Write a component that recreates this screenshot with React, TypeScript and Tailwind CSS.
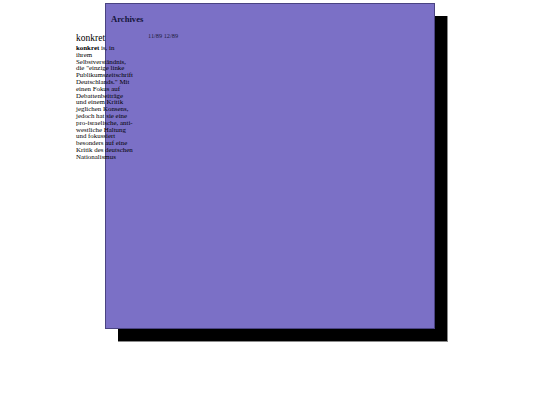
import React from 'react';

const lines = [
  'ihrem',
  'Selbstverständnis,',
  'die "einzige linke',
  'Publikumszeitschrift',
  'Deutschlands." Mit',
  'einen Fokus auf',
  'Debattenbeiträge',
  'und einem Kritik',
  'jeglichen Konsens,',
  'jedoch hat sie eine',
  'pro-israelische, anti-',
  'westliche Haltung',
  'und fokussiert',
  'besonders auf eine',
  'Kritik des deutschen',
  'Nationalismus',
];

export default function App() {
  return (
    <div className="relative w-[540px] h-[405px] bg-white overflow-hidden font-['Liberation_Serif',serif] text-black">
      {/* Archives panel with drop shadow */}
      <div className="absolute left-[118px] top-[16px] w-[330px] h-[326px] bg-black border-r border-b border-[#8a8a8a]" />
      <div className="absolute left-[105px] top-[3px] w-[330px] h-[326px] bg-[#7b70c6] border border-[#4a4382]">
        <h2 className="ml-[5px] mt-[10px] text-[8.6px] leading-[10px] font-bold text-[#14143a]">Archives</h2>
        <div className="ml-[42px] mt-[8px] text-[6.3px] leading-[7px] text-[#1c1c3a]">11/89 12/89</div>
      </div>

      {/* Left column */}
      <div className="relative z-10 ml-[76px] pt-[33px] w-[70px]">
        <div className="text-[9.5px] leading-[11px]">konkret</div>
        <p className="mt-[1px] text-[6.9px] leading-[6.8px]">
          <b>konkret</b> is, in
          {lines.map((l) => (
            <React.Fragment key={l}>
              <br />
              {l}
            </React.Fragment>
          ))}
        </p>
      </div>
    </div>
  );
}
